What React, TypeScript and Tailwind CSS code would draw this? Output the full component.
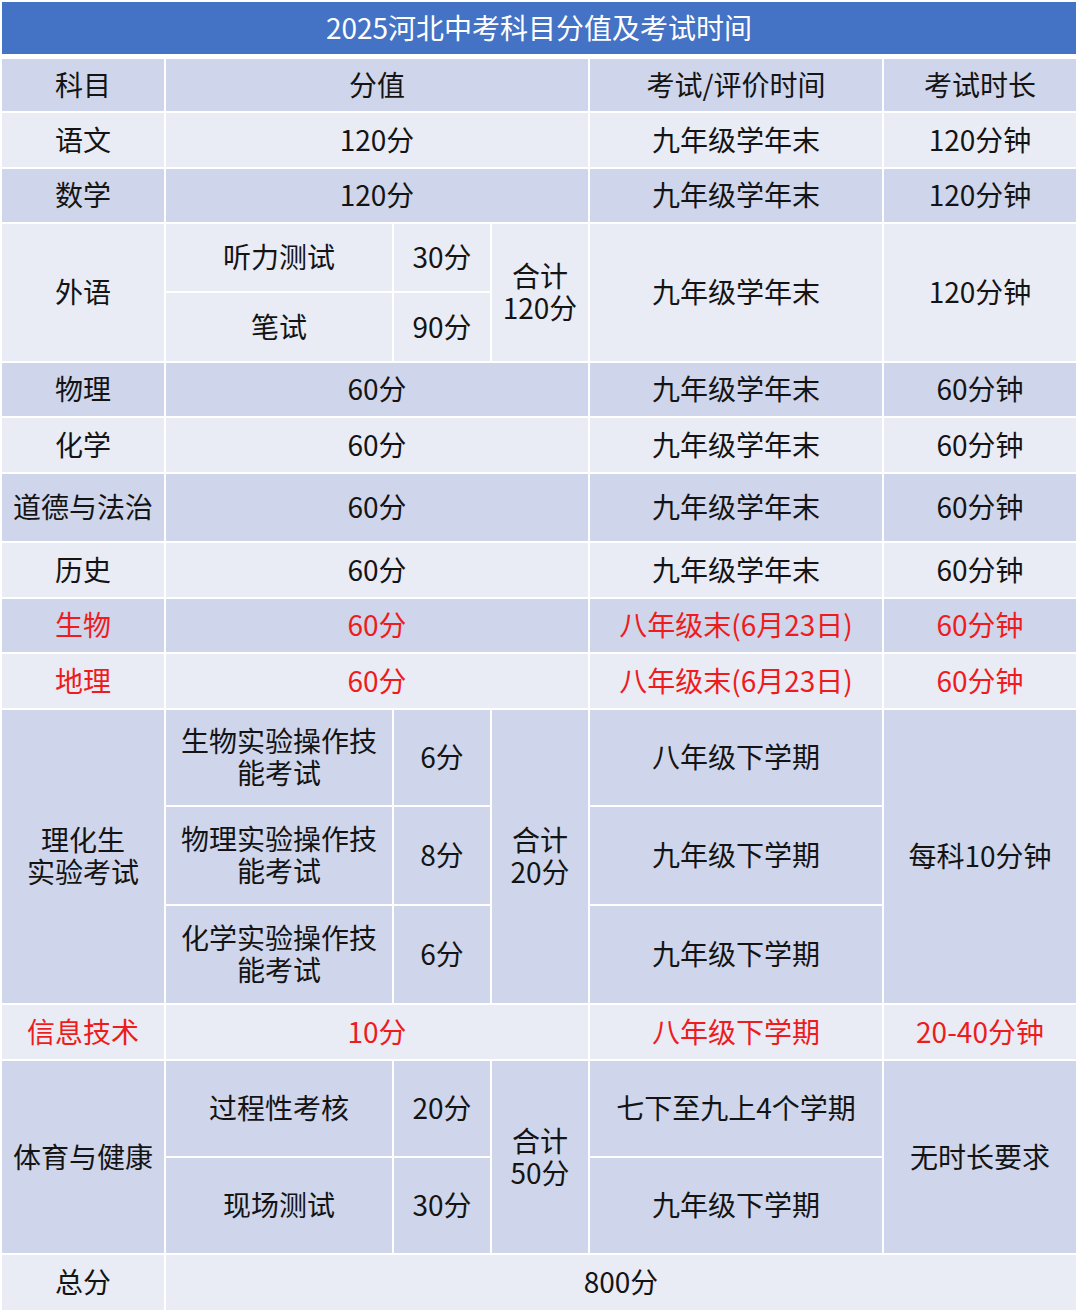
import React from "react";

type Cell = {
  text: React.ReactNode;
  col?: string;
  row?: string;
  red?: boolean;
};

type Group = {
  tone: "dark" | "light";
  cells: Cell[];
};

const groups: Group[] = [
  {
    tone: "dark",
    cells: [
      { text: "科目" },
      { text: "分值", col: "col-span-3" },
      { text: "考试/评价时间" },
      { text: "考试时长" },
    ],
  },
  {
    tone: "light",
    cells: [
      { text: "语文" },
      { text: "120分", col: "col-span-3" },
      { text: "九年级学年末" },
      { text: "120分钟" },
    ],
  },
  {
    tone: "dark",
    cells: [
      { text: "数学" },
      { text: "120分", col: "col-span-3" },
      { text: "九年级学年末" },
      { text: "120分钟" },
    ],
  },
  {
    tone: "light",
    cells: [
      { text: "外语", row: "row-span-2" },
      { text: "听力测试" },
      { text: "30分" },
      { text: <>合计<br />120分</>, row: "row-span-2" },
      { text: "九年级学年末", row: "row-span-2" },
      { text: "120分钟", row: "row-span-2" },
      { text: "笔试" },
      { text: "90分" },
    ],
  },
  {
    tone: "dark",
    cells: [
      { text: "物理" },
      { text: "60分", col: "col-span-3" },
      { text: "九年级学年末" },
      { text: "60分钟" },
    ],
  },
  {
    tone: "light",
    cells: [
      { text: "化学" },
      { text: "60分", col: "col-span-3" },
      { text: "九年级学年末" },
      { text: "60分钟" },
    ],
  },
  {
    tone: "dark",
    cells: [
      { text: "道德与法治" },
      { text: "60分", col: "col-span-3" },
      { text: "九年级学年末" },
      { text: "60分钟" },
    ],
  },
  {
    tone: "light",
    cells: [
      { text: "历史" },
      { text: "60分", col: "col-span-3" },
      { text: "九年级学年末" },
      { text: "60分钟" },
    ],
  },
  {
    tone: "dark",
    cells: [
      { text: "生物", red: true },
      { text: "60分", col: "col-span-3", red: true },
      { text: "八年级末(6月23日)", red: true },
      { text: "60分钟", red: true },
    ],
  },
  {
    tone: "light",
    cells: [
      { text: "地理", red: true },
      { text: "60分", col: "col-span-3", red: true },
      { text: "八年级末(6月23日)", red: true },
      { text: "60分钟", red: true },
    ],
  },
  {
    tone: "dark",
    cells: [
      { text: <>理化生<br />实验考试</>, row: "row-span-3" },
      { text: <>生物实验操作技<br />能考试</> },
      { text: "6分" },
      { text: <>合计<br />20分</>, row: "row-span-3" },
      { text: "八年级下学期" },
      { text: "每科10分钟", row: "row-span-3" },
      { text: <>物理实验操作技<br />能考试</> },
      { text: "8分" },
      { text: "九年级下学期" },
      { text: <>化学实验操作技<br />能考试</> },
      { text: "6分" },
      { text: "九年级下学期" },
    ],
  },
  {
    tone: "light",
    cells: [
      { text: "信息技术", red: true },
      { text: "10分", col: "col-span-3", red: true },
      { text: "八年级下学期", red: true },
      { text: "20-40分钟", red: true },
    ],
  },
  {
    tone: "dark",
    cells: [
      { text: "体育与健康", row: "row-span-2" },
      { text: "过程性考核" },
      { text: "20分" },
      { text: <>合计<br />50分</>, row: "row-span-2" },
      { text: "七下至九上4个学期" },
      { text: "无时长要求", row: "row-span-2" },
      { text: "现场测试" },
      { text: "30分" },
      { text: "九年级下学期" },
    ],
  },
  {
    tone: "light",
    cells: [
      { text: "总分" },
      { text: "800分", col: "col-span-5" },
    ],
  },
];

export default function App() {
  return (
    <div
      className="h-[1316px] w-[1080px] bg-white pl-[2px] pt-[2px] text-[28px] leading-[32px] text-[#141414]"
      style={{ fontFamily: '"Noto Sans CJK SC", "Noto Sans", sans-serif' }}
    >
      <div className="mb-[5px] flex h-[52px] w-[1074px] items-center justify-center bg-[#4472c4] pb-[2px] text-[28px] text-white">
        2025河北中考科目分值及考试时间
      </div>
      <div className="grid w-[1074px] grid-cols-[162px_226px_96px_96px_292px_192px] grid-rows-[52px_54px_53px_67px_68px_53px_54px_67px_54px_53px_54px_95px_97px_97px_54px_95px_95px_55px] gap-[2px] bg-white">
        {groups.map((group, gi) =>
          group.cells.map((cell, ci) => (
            <div
              key={`${gi}-${ci}`}
              className={[
                "flex items-center justify-center pb-[3px] text-center",
                group.tone === "dark" ? "bg-[#cfd5ea]" : "bg-[#e9ebf5]",
                cell.col ?? "",
                cell.row ?? "",
                cell.red ? "text-[#ee1c1c]" : "",
              ].join(" ")}
            >
              <span>{cell.text}</span>
            </div>
          ))
        )}
      </div>
    </div>
  );
}
